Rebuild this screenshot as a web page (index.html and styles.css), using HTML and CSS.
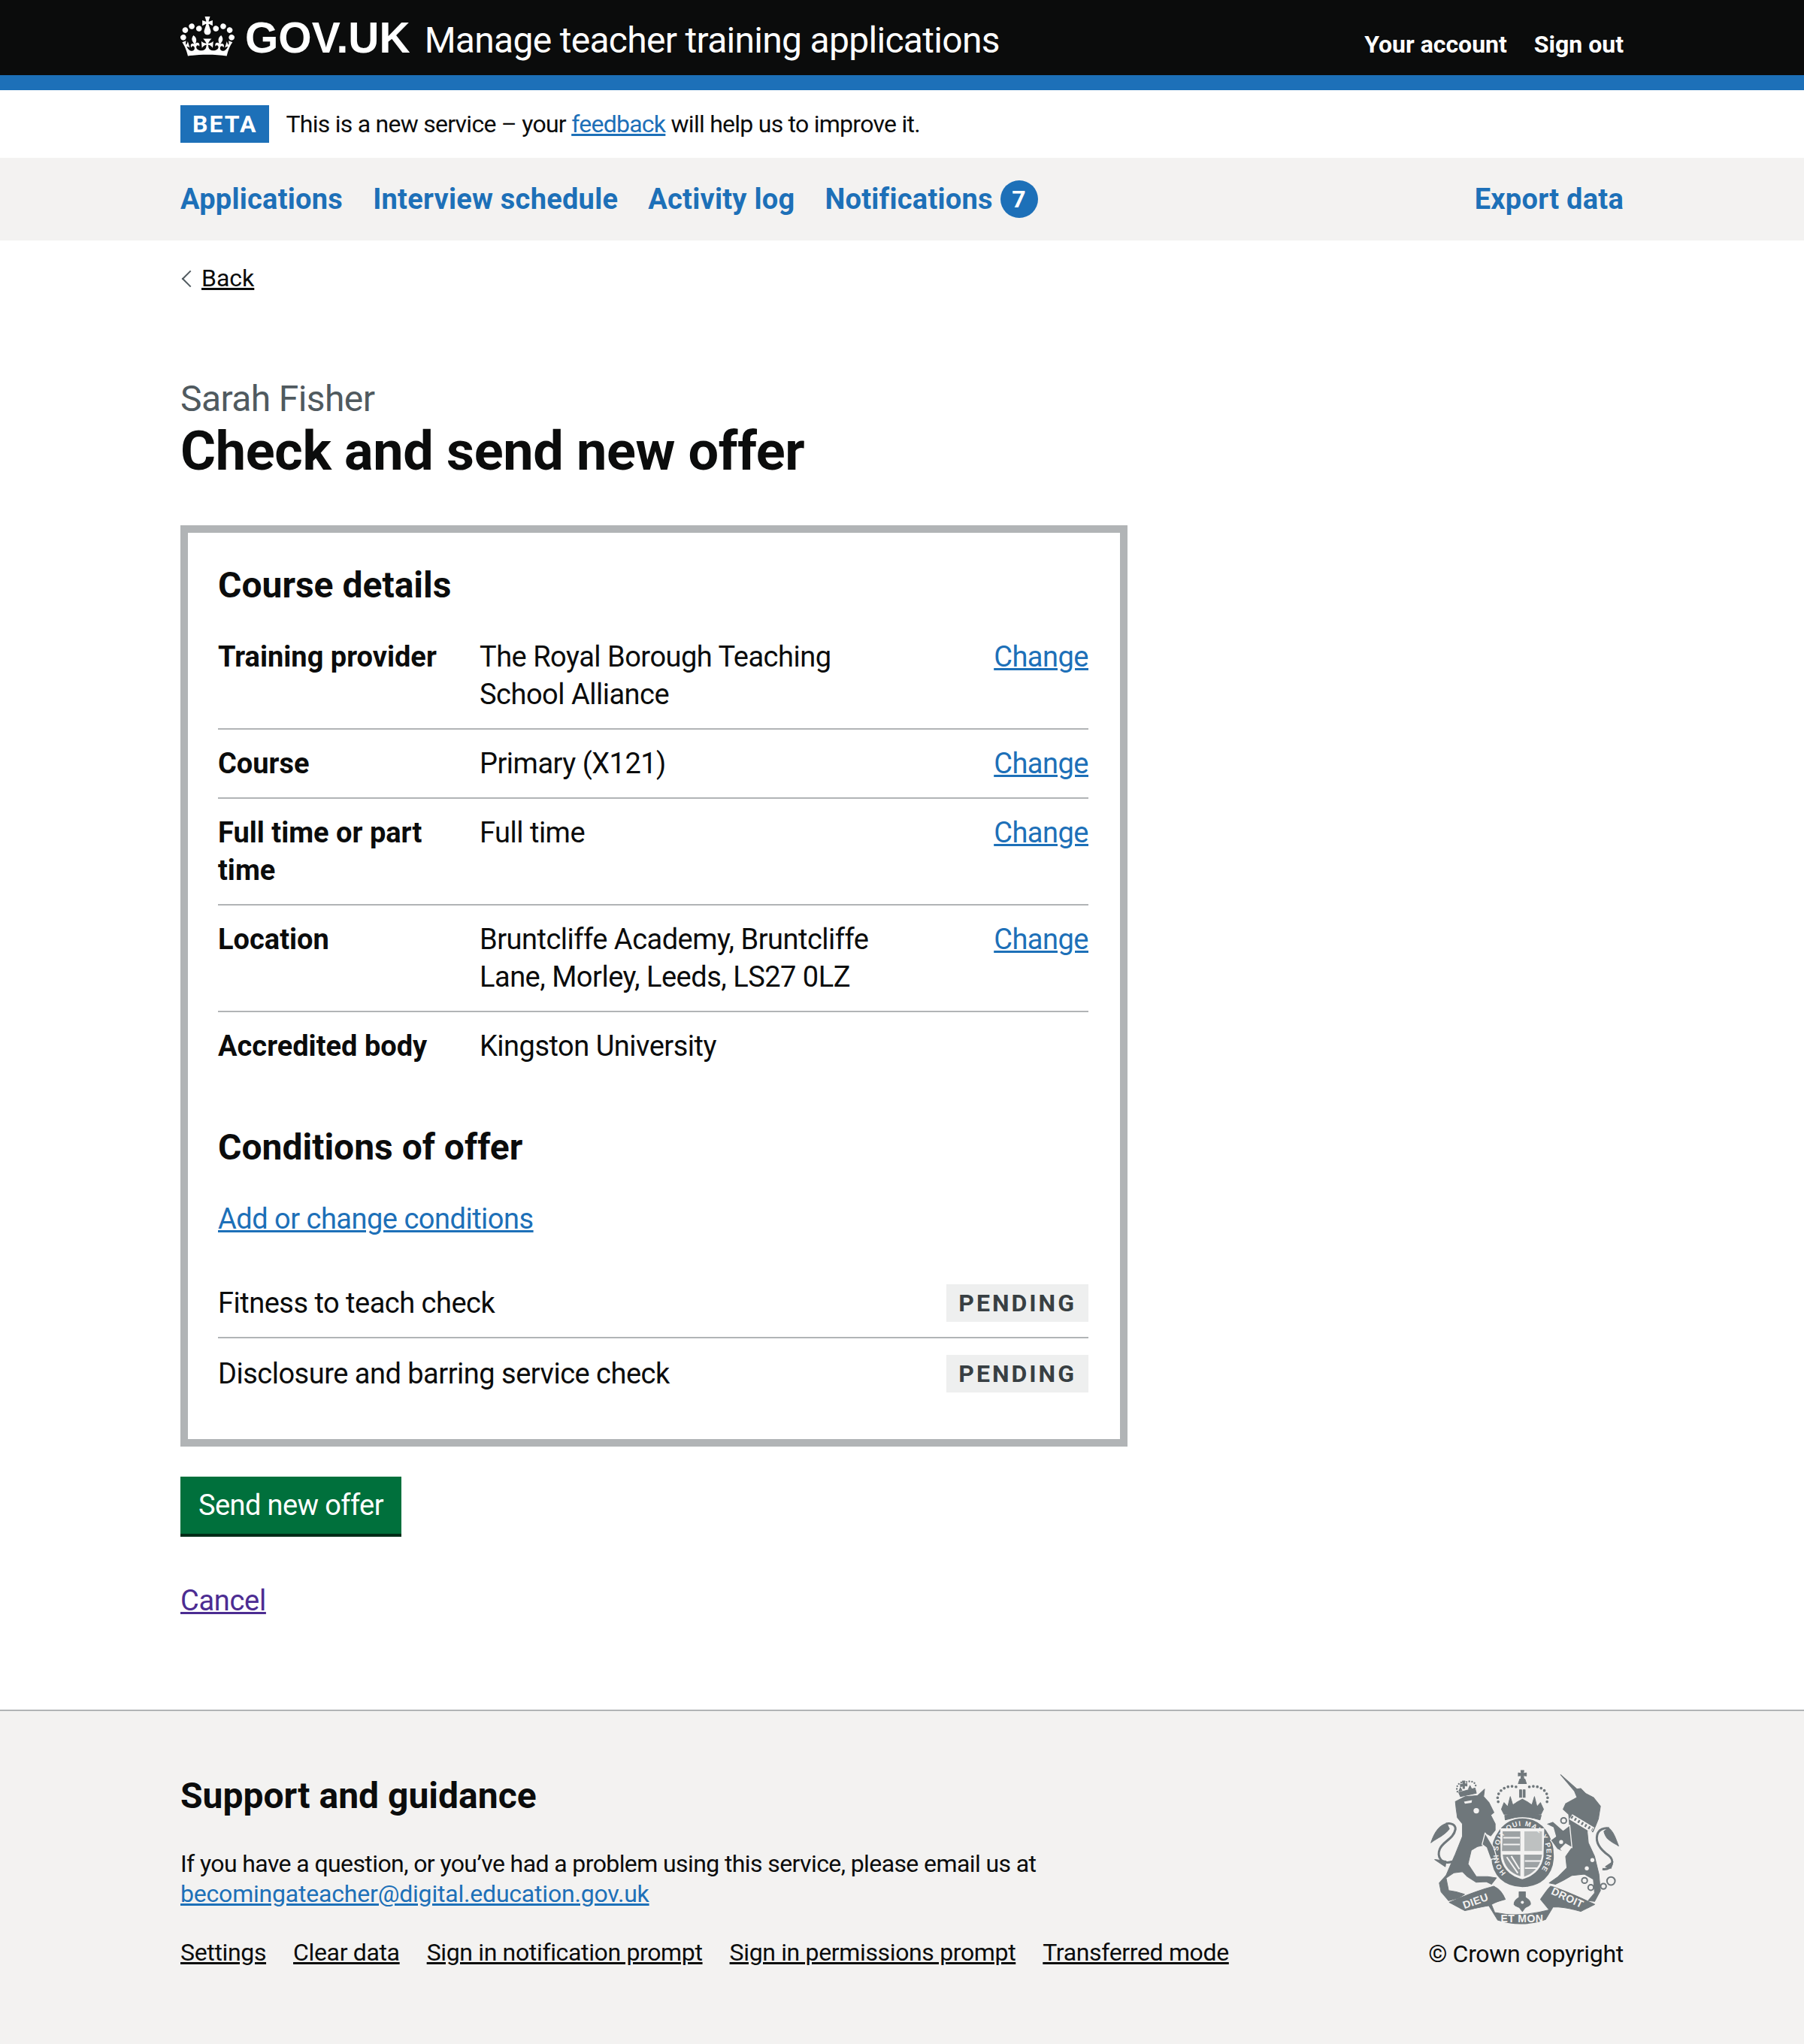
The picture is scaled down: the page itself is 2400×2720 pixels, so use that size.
FILE: index.html
```html
<!DOCTYPE html>
<html lang="en">
<head>
    <meta charset="UTF-8">
    <title>Check and send new offer - Manage teacher training applications - GOV.UK</title>
    <link rel="stylesheet" href="styles.css">
</head>
<body>
    <header class="site-header">
        <div class="width-container header-inner">
            <a class="logo" href="#">
                <svg class="crown" viewBox="0 0 132 97" aria-hidden="true"><path fill="currentColor" fill-rule="evenodd" d="M25 30.2c3.5 1.5 7.7-.2 9.1-3.7 1.5-3.6-.2-7.8-3.9-9.2-3.6-1.4-7.6.3-9.1 3.9-1.4 3.5.3 7.5 3.9 9zM9 39.5c3.6 1.5 7.8-.2 9.2-3.7 1.5-3.6-.2-7.8-3.9-9.1-3.6-1.5-7.6.2-9.1 3.8-1.4 3.5.3 7.5 3.8 9zM4.4 57.2c3.5 1.5 7.7-.2 9.1-3.8 1.5-3.6-.2-7.7-3.9-9.1-3.5-1.5-7.6.3-9.1 3.8-1.4 3.5.3 7.6 3.9 9.1zm38.3-21.4c3.5 1.5 7.7-.2 9.1-3.8 1.5-3.6-.2-7.7-3.9-9.1-3.6-1.5-7.6.3-9.1 3.8-1.3 3.6.4 7.7 3.9 9.1zm64.4-5.6c-3.6 1.5-7.8-.2-9.1-3.7-1.5-3.6.2-7.8 3.8-9.2 3.6-1.4 7.7.3 9.2 3.9 1.3 3.5-.4 7.5-3.9 9zm15.9 9.3c-3.6 1.5-7.7-.2-9.1-3.7-1.5-3.6.2-7.8 3.7-9.1 3.6-1.5 7.7.2 9.2 3.8 1.5 3.5-.3 7.5-3.8 9zm4.7 17.7c-3.6 1.5-7.8-.2-9.2-3.8-1.5-3.6.2-7.7 3.9-9.1 3.6-1.5 7.7.3 9.2 3.8 1.3 3.5-.4 7.6-3.9 9.1zM89.3 35.8c-3.6 1.5-7.8-.2-9.2-3.8-1.4-3.6.2-7.7 3.9-9.1 3.6-1.5 7.7.3 9.2 3.8 1.4 3.6-.3 7.7-3.9 9.1zM69.7 17.7l8.9 4.7V9.3l-8.9 2.8c-.2-.3-.5-.6-.9-.9L72.4 0H59.6l3.5 11.2c-.3.3-.6.5-.9.9l-8.8-2.8v13.1l8.8-4.7c.3.3.6.7.9.9l-5 15.4v.1c-.2.8-.4 1.6-.4 2.4 0 4.1 3.1 7.5 7 8.1h.2c.3 0 .7.1 1 .1.4 0 .7 0 1-.1h.2c4-.6 7.1-4.1 7.1-8.1 0-.8-.1-1.7-.4-2.4V34l-5.1-15.4c.4-.2.7-.6 1-.9zM66 92.8c16.9 0 32.8 1.1 47.1 3.2 4-16.9 8.9-26.7 14-33.5l-9.6-3.4c1 4.9 1.1 7.2 0 10.2-1.5-1.4-3-4.3-4.2-8.7L108.6 76c2.8-2 5-3.2 7.5-3.3-4.4 9.4-10 11.9-13.6 11.2-4.3-.8-6.3-4.6-5.6-7.9 1-4.7 5.7-5.9 8-.5 4.3-8.7-3-11.4-7.6-8.8 7.1-7.2 7.9-13.5 2.1-21.1-8 6.1-8.1 12.3-4.5 20.8-4.7-5.4-12.1-2.5-9.5 6.2 3.4-5.2 7.9-2 7.2 3.1-.6 4.3-6.4 7.8-13.5 7.2-10.3-.9-10.9-8-11.2-13.8 2.5-.5 7.1 1.8 11 7.3L80.2 60c-4.1 4.4-8 5.3-12.3 5.4 1.4-4.4 8-11.6 8-11.6H55.5s6.4 7.2 7.9 11.6c-4.2-.1-8-1-12.3-5.4l1.4 16.4c3.9-5.5 8.5-7.7 10.9-7.3-.3 5.8-.9 12.8-11.1 13.8-7.2.6-12.9-2.9-13.5-7.2-.7-5 3.8-8.3 7.1-3.1 2.7-8.7-4.6-11.6-9.4-6.2 3.7-8.5 3.6-14.7-4.6-20.8-5.8 7.6-5 13.9 2.2 21.1-4.7-2.6-11.9.1-7.7 8.8 2.3-5.5 7.1-4.2 8.1.5.7 3.3-1.3 7.1-5.7 7.9-3.5.7-9-1.8-13.5-11.2 2.5.1 4.7 1.3 7.5 3.3l-4.7-15.4c-1.2 4.4-2.7 7.2-4.3 8.7-1.1-3-.9-5.3 0-10.2l-9.5 3.4c5 6.9 9.9 16.7 14 33.5 14.8-2.1 30.8-3.2 47.7-3.2z"></path></svg>
                <span class="logo-text">GOV.UK</span>
            </a>
            <a class="service-name" href="#">Manage teacher training applications</a>
            <nav class="account-nav">
                <a href="#">Your account</a>
                <a href="#">Sign out</a>
            </nav>
        </div>
    </header>
    <div class="width-container phase-banner">
        <strong class="phase-tag">BETA</strong>
        <span>This is a new service – your <a href="#">feedback</a> will help us to improve it.</span>
    </div>
    <nav class="primary-nav">
        <div class="width-container primary-nav-inner">
            <a href="#">Applications</a>
            <a href="#">Interview schedule</a>
            <a href="#">Activity log</a>
            <a href="#">Notifications <span class="count">7</span></a>
            <a class="nav-end" href="#">Export data</a>
        </div>
    </nav>
    <div class="width-container">
        <a class="back-link" href="#">Back</a>
        <main class="main">
            <span class="caption">Sarah Fisher</span>
            <h1>Check and send new offer</h1>
            <div class="review-box">
                <h2>Course details</h2>
                <dl class="summary">
                    <div class="summary-row">
                        <dt>Training provider</dt>
                        <dd>The Royal Borough Teaching School Alliance</dd>
                        <dd class="summary-action"><a href="#">Change</a></dd>
                    </div>
                    <div class="summary-row">
                        <dt>Course</dt>
                        <dd>Primary (X121)</dd>
                        <dd class="summary-action"><a href="#">Change</a></dd>
                    </div>
                    <div class="summary-row">
                        <dt>Full time or part time</dt>
                        <dd>Full time</dd>
                        <dd class="summary-action"><a href="#">Change</a></dd>
                    </div>
                    <div class="summary-row">
                        <dt>Location</dt>
                        <dd>Bruntcliffe Academy, Bruntcliffe Lane, Morley, Leeds, LS27 0LZ</dd>
                        <dd class="summary-action"><a href="#">Change</a></dd>
                    </div>
                    <div class="summary-row">
                        <dt>Accredited body</dt>
                        <dd>Kingston University</dd>
                    </div>
                </dl>
                <h2>Conditions of offer</h2>
                <p class="conditions-link"><a href="#">Add or change conditions</a></p>
                <div class="condition-row">
                    <span>Fitness to teach check</span>
                    <strong class="status-tag">PENDING</strong>
                </div>
                <div class="condition-row">
                    <span>Disclosure and barring service check</span>
                    <strong class="status-tag">PENDING</strong>
                </div>
            </div>
            <button class="button">Send new offer</button>
            <p class="cancel"><a href="#">Cancel</a></p>
        </main>
    </div>
    <footer class="site-footer">
        <div class="width-container footer-inner">
            <div class="footer-main">
                <h2>Support and guidance</h2>
                <p>If you have a question, or you’ve had a problem using this service, please email us at <a class="footer-email" href="#">becomingateacher@digital.education.gov.uk</a></p>
                <ul class="footer-links">
                    <li><a href="#">Settings</a></li>
                    <li><a href="#">Clear data</a></li>
                    <li><a href="#">Sign in notification prompt</a></li>
                    <li><a href="#">Sign in permissions prompt</a></li>
                    <li><a href="#">Transferred mode</a></li>
                </ul>
            </div>
            <div class="footer-crest">
                <svg class="crest" viewBox="160 105 755 615" aria-hidden="true">
                    <defs>
                        <path id="crest-ring" d="M463 515 A96 108 0 1 1 593 515"/>
                    </defs>
                    <g class="crest-tails">
                        <path d="M250 470 C205 484 188 450 200 420 C212 390 255 380 262 342 C264 325 245 314 225 320"/>
                        <path d="M846 500 C885 504 897 465 870 445 C835 420 818 395 825 365 C830 342 855 334 872 338"/>
                    </g>
                    <g class="crest-dark">
                        <!-- lion -->
                        <path d="M262 232 L300 212 L350 208 L378 182 L374 212 L395 235 L415 275 L402 285 L420 320 L420 345 L402 368 L380 356 L395 400 L350 410 L325 425 L312 480 L345 530 L390 530 L425 535 L405 560 L385 550 L345 552 L310 530 L290 510 L255 515 L225 535 L235 585 L265 590 L298 600 L275 615 L235 625 L205 590 L198 555 L225 525 L240 490 L262 440 L290 370 L290 320 L270 295 L265 260 Z"/>
                        <path d="M228 318 C200 325 180 350 165 395 C190 375 215 370 238 340 Z"/>
                        <path d="M180 462 L225 468 L222 490 Z"/>
                        <path d="M275 195 L340 178 L345 198 L282 212 Z"/>
                        <path d="M290 150 H300 L298 162 L308 160 V170 L298 168 V180 H292 V170 L282 172 V162 L292 164 Z"/>
                        <path d="M276 190 L282 176 L288 188 Z M314 182 L320 168 L326 180 Z"/>
                        <!-- unicorn -->
                        <path d="M680 125 L745 182 L760 180 L780 200 L810 215 L838 250 L830 300 L820 325 L808 352 L785 345 L790 395 L815 450 L832 520 L838 585 L815 628 L790 625 L815 595 L810 540 L775 520 L725 525 L690 545 L660 560 L635 555 L670 530 L705 495 L700 450 L725 415 L712 345 L715 320 L712 282 L690 262 L700 240 L745 215 L735 190 Z"/>
                        <path d="M870 336 C890 350 900 380 910 408 C885 392 860 385 852 350 Z"/>
                        <path d="M858 490 L888 470 L880 497 Z"/>
                        <!-- crown -->
                        <path d="M522 108 H534 L532 120 L544 118 V130 L532 128 L534 140 H522 L524 128 L512 130 V118 L524 120 Z"/>
                        <path d="M518 142 H538 L544 160 H512 Z"/>
                        <path d="M517 185 H525 V215 H517 Z M531 185 H539 V215 H531 Z"/>
                        <path d="M445 262 L455 236 L470 252 L480 212 L490 245 L505 235 L528 222 L551 235 L566 245 L576 212 L586 252 L600 236 L612 262 L602 282 L455 282 Z"/>
                        <path d="M458 286 Q528 266 603 286 L598 304 Q528 284 460 304 Z"/>
                    </g>
                    <path class="crest-ring" d="M528 296 C610 296 660 370 655 460 C650 530 600 572 528 574 C455 572 405 530 402 450 C400 370 450 296 528 296 Z"/>
                    <path class="crest-light" d="M440 338 H615 L612 450 C605 500 570 530 528 540 C485 530 448 500 442 450 Z"/>
                    <g class="crest-quarters">
                        <path d="M450 350 H520 V428 H447 Z" opacity="0.65"/>
                        <path d="M536 350 H606 V428 H536 Z" opacity="0.4"/>
                        <path d="M450 442 H520 V528 C480 515 455 490 450 442 Z" opacity="0.75"/>
                        <path d="M535 442 H606 C600 490 570 518 535 530 Z" opacity="0.65"/>
                    </g>
                    <g class="crest-lines">
                        <path d="M452 375 H518 M452 402 H518 M538 468 H604 M538 496 H590"/>
                        <path d="M466 452 L510 516 M484 448 L516 500"/>
                        <path class="crest-collar" d="M720 292 L808 345"/>
                    </g>
                    <path class="crest-teeth" d="M722 292 L806 343"/>
                    <!-- paws and legs lying over the garter -->
                    <g class="crest-over">
                        <path d="M380 356 L415 415 L426 455 L402 462 L385 415 L368 402 Z"/>
                        <path d="M620 320 L650 310 L690 345 L716 325 L725 415 L700 400 L680 420 L695 435 L665 420 L640 385 L660 370 L650 335 Z"/>
                    </g>
                    <g class="crest-pearls">
                        <path d="M432 232 C418 190 470 158 512 176 M626 232 C640 190 590 158 546 176"/>
                        <path class="crest-pearls-small" d="M270 192 C260 165 285 148 302 156 C322 144 348 155 342 178"/>
                    </g>
                    <g class="crest-rings">
                        <circle cx="775" cy="545" r="11"/>
                        <circle cx="800" cy="573" r="11"/>
                        <circle cx="850" cy="568" r="11"/>
                        <circle cx="880" cy="547" r="16"/>
                        <circle cx="692" cy="307" r="11"/>
                        <circle cx="682" cy="392" r="11"/>
                    </g>
                    <g class="crest-spots">
                        <circle cx="345" cy="268" r="11"/>
                        <path d="M296 232 L328 226 L326 236 L300 240 Z"/>
                        <circle cx="815" cy="416" r="11"/>
                        <circle cx="806" cy="464" r="8"/>
                        <circle cx="784" cy="497" r="8"/>
                    </g>
                    <!-- motto scroll -->
                    <g class="crest-dark">
                        <path d="M238 632 C290 610 350 585 415 568 C440 580 452 600 460 620 C440 625 420 632 405 640 L418 672 C490 688 560 682 635 662 L600 620 C615 600 625 582 640 568 C700 585 760 615 815 640 C795 650 775 660 760 668 C720 656 685 650 650 650 L620 700 C560 722 490 722 430 702 L395 645 C365 650 330 658 300 665 C280 655 258 642 238 632 Z"/>
                        <path d="M515 590 H540 V612 C550 618 562 628 560 640 C552 650 540 650 538 655 L528 668 L518 655 C516 650 502 650 495 640 C494 628 505 618 515 612 Z"/>
                    </g>
                    <g class="crest-spots">
                        <circle cx="528" cy="632" r="6"/>
                    </g>
                    <g class="crest-text">
                        <text class="crest-garter"><textPath href="#crest-ring" textLength="478">HONI SOIT QUI MAL Y PENSE</textPath></text>
                        <text x="298" y="658" transform="rotate(-20 298 658)">DIEU</text>
                        <text x="442" y="710">ET MON</text>
                        <text x="640" y="598" transform="rotate(25 640 598)">DROIT</text>
                    </g>
                </svg>
                <span>© Crown copyright</span>
            </div>
        </div>
    </footer>
</body>
</html>
```

FILE: styles.css
```css
* {
    box-sizing: border-box;
}
body {
    margin: 0;
    font-family: Roboto, sans-serif;
    font-size: 38px;
    line-height: 50px;
    letter-spacing: -0.5px;
    color: #0b0c0c;
    background: white;
}
a {
    color: #1d70b8;
}
strong, dt, h1, h2 {
    letter-spacing: 0;
}
.width-container {
    width: 1920px;
    margin: 0 auto;
}
.site-header {
    height: 120px;
    background: #0b0c0c;
    border-bottom: 20px solid #1d70b8;
}
.header-inner {
    display: flex;
    align-items: center;
    height: 100px;
}
.site-header a {
    color: white;
    text-decoration: none;
}
.logo {
    display: flex;
    align-items: center;
    margin-right: 19px;
}
.crown {
    width: 72px;
    height: 53px;
    margin-top: -4px;
    margin-right: 14px;
}
.logo-text {
    font-family: "Liberation Sans", sans-serif;
    font-size: 57px;
    font-weight: bold;
    letter-spacing: 0;
}
.service-name {
    margin-top: 8px;
    font-size: 48px;
    letter-spacing: -0.7px;
}
.account-nav {
    display: flex;
    gap: 36px;
    margin-left: auto;
    margin-top: 18px;
    font-size: 32px;
    font-weight: bold;
    letter-spacing: 0;
}
.phase-banner {
    display: flex;
    align-items: center;
    gap: 22px;
    height: 90px;
    font-size: 32px;
    letter-spacing: -0.74px;
}
.phase-tag {
    padding: 0 16px;
    background: #1d70b8;
    color: white;
    letter-spacing: 2px;
    line-height: 50px;
}
.primary-nav {
    height: 110px;
    background: #f3f2f1;
}
.primary-nav-inner {
    display: flex;
    align-items: center;
    gap: 40px;
    height: 110px;
}
.primary-nav a {
    font-weight: bold;
    letter-spacing: 0.25px;
    text-decoration: none;
}
.primary-nav .nav-end {
    margin-left: auto;
}
.count {
    display: inline-block;
    width: 50px;
    height: 50px;
    border-radius: 50%;
    background: #1d70b8;
    color: white;
    font-size: 32px;
    line-height: 50px;
    text-align: center;
    vertical-align: top;
}
.back-link {
    display: inline-block;
    position: relative;
    margin-top: 30px;
    padding-left: 28px;
    color: #0b0c0c;
    font-size: 32px;
    line-height: 40px;
    letter-spacing: 0;
}
.back-link::before {
    content: "";
    position: absolute;
    left: 5px;
    top: 13px;
    width: 14px;
    height: 14px;
    border-left: 2px solid #505a5f;
    border-bottom: 2px solid #505a5f;
    transform: rotate(45deg);
}
.main {
    width: 1260px;
    padding-top: 108px;
}
.caption {
    display: block;
    color: #505a5f;
    font-size: 48px;
    line-height: 60px;
    letter-spacing: -0.6px;
}
h1 {
    margin: 0 0 58px;
    font-size: 72px;
    line-height: 80px;
    letter-spacing: -0.35px;
}
h2 {
    margin: 0 0 40px;
    font-size: 48px;
    line-height: 60px;
}
.review-box {
    border: 10px solid #b1b4b6;
    padding: 40px 42px 42px 40px;
}
.summary {
    margin: 0 0 60px;
}
.summary-row {
    display: flex;
    padding: 20px 0;
    border-bottom: 2px solid #b1b4b6;
}
.summary-row:last-child {
    border-bottom: 0;
}
.summary-row:first-child {
    padding-top: 0;
}
.summary-row dt {
    width: 348px;
    padding-right: 40px;
    font-weight: bold;
}
.summary-row dd {
    width: 540px;
    margin: 0;
}
.summary-row .summary-action {
    width: auto;
    margin-left: auto;
}
.conditions-link {
    margin: 0 0 42px;
}
.condition-row {
    display: flex;
    justify-content: space-between;
    padding: 20px 0;
    border-bottom: 2px solid #b1b4b6;
}
.condition-row:last-child {
    padding-top: 22px;
    border-bottom: 0;
}
.status-tag {
    padding: 0 16px;
    background: #eeefef;
    color: #383f43;
    font-size: 32px;
    letter-spacing: 3px;
}
.button {
    display: block;
    height: 80px;
    margin-top: 40px;
    padding: 0 24px 4px;
    border: 0;
    background: #00703c;
    box-shadow: inset 0 -4px 0 #002d18;
    color: white;
    font: inherit;
    letter-spacing: -0.6px;
}
.cancel {
    margin: 60px 0 0;
    letter-spacing: -0.3px;
}
.cancel a {
    color: #4c2c92;
}
.site-footer {
    height: 447px;
    margin-top: 120px;
    border-top: 2px solid #b1b4b6;
    background: #f3f2f1;
    font-size: 32px;
    line-height: 40px;
}
.footer-inner {
    display: flex;
    justify-content: space-between;
}
.footer-main {
    flex: none;
    width: 1440px;
    padding-top: 83px;
}
.footer-main h2 {
    margin-bottom: 40px;
}
.footer-main p {
    margin: 0 0 38px;
    letter-spacing: -0.6px;
}
.footer-email {
    display: block;
    letter-spacing: -0.2px;
}
.footer-links {
    display: flex;
    gap: 36px;
    margin: 0;
    padding: 0;
    list-style: none;
    letter-spacing: -0.35px;
    white-space: nowrap;
}
.footer-links a {
    color: #0b0c0c;
}
.footer-crest {
    display: flex;
    flex-direction: column;
    align-items: flex-end;
    gap: 19px;
    padding-top: 78px;
    letter-spacing: -0.3px;
    white-space: nowrap;
}
.crest {
    width: 253px;
    height: 206px;
    margin-right: 5px;
}
.crest-dark {
    fill: #6f777b;
    stroke: #6f777b;
    stroke-width: 3;
    stroke-linejoin: round;
}
.crest-tails {
    fill: none;
    stroke: #6f777b;
    stroke-width: 9;
}
.crest-ring {
    fill: #6f777b;
    stroke: #f3f2f1;
    stroke-width: 5;
}
.crest-light {
    fill: #f3f2f1;
}
.crest-quarters {
    fill: #6f777b;
}
.crest-lines {
    fill: none;
    stroke: #f3f2f1;
    stroke-width: 6;
}
.crest-lines .crest-collar {
    stroke-width: 24;
}
.crest-teeth {
    fill: none;
    stroke: #6f777b;
    stroke-width: 12;
    stroke-dasharray: 7 9;
}
.crest-over {
    fill: #6f777b;
    stroke: #f3f2f1;
    stroke-width: 4;
    stroke-linejoin: round;
}
.crest-pearls {
    fill: none;
    stroke: #6f777b;
    stroke-width: 11;
    stroke-linecap: round;
    stroke-dasharray: 0 16;
}
.crest-pearls .crest-pearls-small {
    stroke-width: 7;
    stroke-dasharray: 0 11;
}
.crest-rings {
    fill: #f3f2f1;
    stroke: #6f777b;
    stroke-width: 6;
}
.crest-spots {
    fill: #f3f2f1;
}
.crest-text {
    fill: #f3f2f1;
    font-family: "Liberation Sans", sans-serif;
    font-size: 42px;
    font-weight: bold;
    letter-spacing: 1px;
}
.crest-text .crest-garter {
    font-size: 28px;
    letter-spacing: 0;
}
```
